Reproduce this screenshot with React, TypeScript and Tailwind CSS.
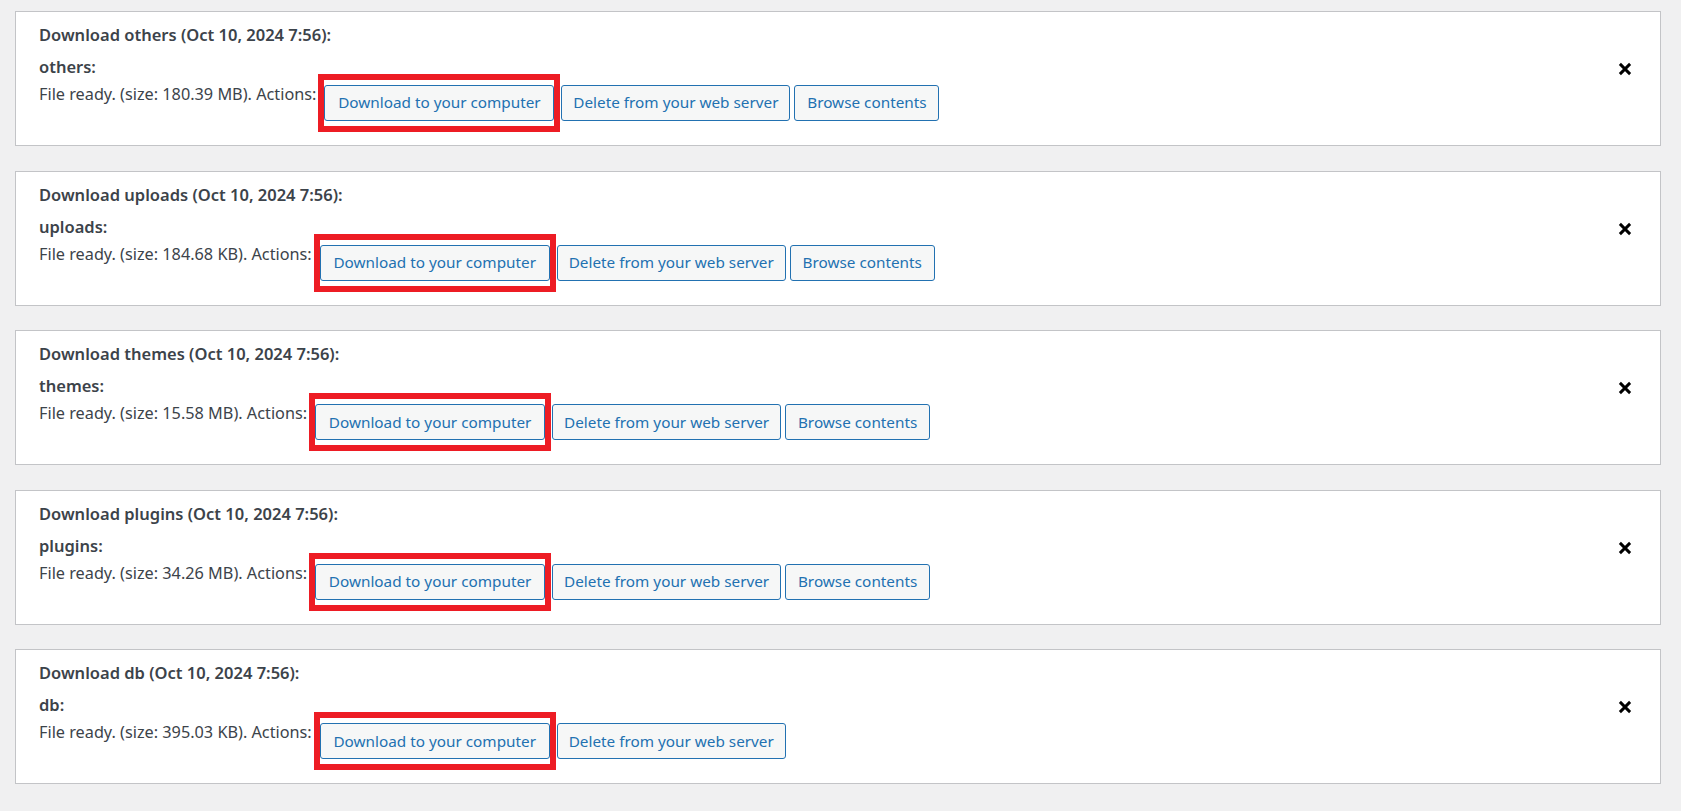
type Backup = {
  name: string;
  size: string;
  browse: boolean;
};

const backups: Backup[] = [
  { name: "others", size: "180.39 MB", browse: true },
  { name: "uploads", size: "184.68 KB", browse: true },
  { name: "themes", size: "15.58 MB", browse: true },
  { name: "plugins", size: "34.26 MB", browse: true },
  { name: "db", size: "395.03 KB", browse: false },
];

const buttonClass =
  "h-[36px] rounded-[3px] border border-[#2271b1] bg-[#f6f7f7] text-[15.3px] leading-none text-[#2271b1] whitespace-nowrap";

const BackupCard = ({ backup }: { backup: Backup }) => {
  return (
    <div className="flex h-[135px] justify-between border border-[#c3c4c7] bg-white pt-[11px] pl-[23px] pr-[28px]">
      <div className="flex flex-col">
        <div className="text-[16.5px] leading-[24px] font-semibold text-[#3c434a]">
          Download {backup.name} (Oct 10, 2024 7:56):
        </div>
        <div className="mt-[8px] text-[16.5px] leading-[24px] font-semibold text-[#3c434a]">
          {backup.name}:
        </div>
        <div className="mt-[6px] flex items-start">
          <span className="text-[16.25px] leading-[19px] text-[#3c434a] whitespace-nowrap">
            File ready. (size: {backup.size}). Actions:
          </span>
          <button className={`relative ml-[8px] w-[230px] ${buttonClass}`}>
            Download to your computer
            {/* red highlight drawn over the screenshot */}
            <span className="pointer-events-none absolute -top-[12px] -bottom-[12px] -left-[7px] -right-[7px] border-[6.5px] border-[#ed1c24]" />
          </button>
          <button className={`ml-[7px] w-[229px] ${buttonClass}`}>
            Delete from your web server
          </button>
          {backup.browse && (
            <button className={`ml-[4px] w-[145px] ${buttonClass}`}>
              Browse contents
            </button>
          )}
        </div>
      </div>
      <button className="mt-[39px] h-[14px] w-[14px] text-black">
        <svg width="14" height="14" viewBox="0 0 14 14" fill="none">
          <path
            d="M1.9 1.9L12.1 12.1M12.1 1.9L1.9 12.1"
            stroke="currentColor"
            strokeWidth="2.9"
          />
        </svg>
      </button>
    </div>
  );
};

export default function App() {
  return (
    <div className="min-h-screen bg-[#f0f0f1] pt-[11px] pl-[15px] pr-[20px] pb-[20px] font-['Noto_Sans',sans-serif]">
      <div className="flex flex-col gap-[24.6px]">
        {backups.map((b) => (
          <BackupCard key={b.name} backup={b} />
        ))}
      </div>
    </div>
  );
}
